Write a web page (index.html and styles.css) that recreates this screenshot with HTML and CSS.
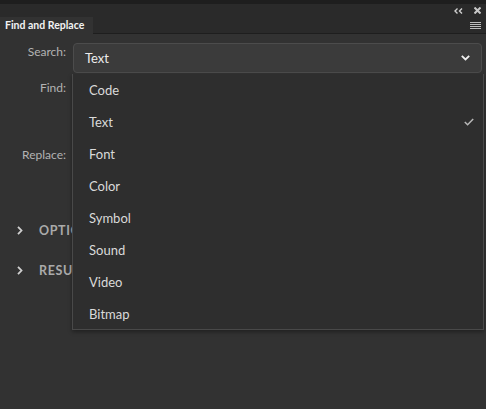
FILE: index.html
```html
<!DOCTYPE html>
<html>
<head>
<meta charset="utf-8">
<link rel="stylesheet" href="styles.css">
</head>
<body>
<div class="panel">
  <div class="topstrip"></div>
  <div class="titlebar">
    <svg class="ico-collapse" width="9" height="6" viewBox="0 0 9 6"><polyline points="3.5,0.5 1,3 3.5,5.5" fill="none" stroke="#d0d0d0" stroke-width="1.4"/><polyline points="8,0.5 5.5,3 8,5.5" fill="none" stroke="#d0d0d0" stroke-width="1.4"/></svg>
    <svg class="ico-close" width="7" height="7" viewBox="0 0 7 7"><path d="M0.5 0.5 L6.5 6.5 M6.5 0.5 L0.5 6.5" stroke="#c8c8c8" stroke-width="2"/></svg>
  </div>
  <div class="tabrow">
    <div class="tab">Find and Replace</div>
    <div class="tabfill">
      <svg class="ico-menu" width="11" height="8" viewBox="0 0 11 8"><path d="M0 0.5H11M0 2.5H11M0 4.5H11M0 6.5H11" stroke="#bdbdbd" stroke-width="1"/></svg>
    </div>
  </div>
  <div class="content">
    <div class="row row-search">
      <div class="label">Search:</div>
      <div class="select">
        <span>Text</span>
        <svg width="9" height="6" viewBox="0 0 9 6"><polyline points="0.8,0.8 4.5,4.5 8.2,0.8" fill="none" stroke="#f0f0f0" stroke-width="1.8"/></svg>
      </div>
    </div>
    <div class="row row-field">
      <div class="label">Find:</div>
      <div class="field"></div>
    </div>
    <div class="row row-field">
      <div class="label">Replace:</div>
      <div class="field"></div>
    </div>
    <div class="section">
      <svg width="6" height="9" viewBox="0 0 6 9"><polyline points="1,0.8 4.5,4.5 1,8.2" fill="none" stroke="#d0d0d0" stroke-width="1.8"/></svg>
      <span>OPTIONS</span>
    </div>
    <div class="section">
      <svg width="6" height="9" viewBox="0 0 6 9"><polyline points="1,0.8 4.5,4.5 1,8.2" fill="none" stroke="#d0d0d0" stroke-width="1.8"/></svg>
      <span>RESULTS</span>
    </div>
  </div>
  <ul class="menu">
    <li>Code</li>
    <li class="checked">Text<svg width="10" height="8" viewBox="0 0 10 8"><polyline points="0.8,4 3.6,6.8 9.2,1" fill="none" stroke="#b8b8b8" stroke-width="1.5"/></svg></li>
    <li>Font</li>
    <li>Color</li>
    <li>Symbol</li>
    <li>Sound</li>
    <li>Video</li>
    <li>Bitmap</li>
  </ul>
</div>
</body>
</html>
```

FILE: styles.css
```css
html, body {
  margin: 0;
  padding: 0;
  background: #323232;
  width: 486px;
  height: 409px;
  overflow: hidden;
  font-family: Lato, "Open Sans", sans-serif;
}
.panel {
  position: relative;
  width: 486px;
  height: 409px;
}
.topstrip {
  height: 4px;
  background: #1e1e1e;
}
.titlebar {
  height: 13px;
  background: #2a2a2a;
  display: flex;
  align-items: center;
  justify-content: flex-end;
  padding-right: 5px;
  gap: 11px;
}
.ico-collapse { display: block; }
.ico-close { display: block; }
.tabrow {
  height: 17px;
  display: flex;
}
.tab {
  width: 93px;
  background: #323232;
  color: #f2f2f2;
  font-weight: bold;
  font-size: 10.5px;
  line-height: 17px;
  padding-left: 5px;
  box-sizing: border-box;
}
.tabfill {
  flex: 1;
  background: #2a2a2a;
  border-bottom: 1px solid #1e1e1e;
  display: flex;
  align-items: center;
  justify-content: flex-end;
  padding-right: 5px;
}
.ico-menu { display: block; margin-top: 1px; }
.content {
  padding: 9px 4px 0 0;
}
.row {
  display: grid;
  grid-template-columns: 66px 1fr;
  column-gap: 7px;
}
.label {
  text-align: right;
  color: #b3b3b3;
  font-size: 12px;
  line-height: 16px;
}
.row-search .label {
  padding-top: 1px;
}
.select {
  height: 30px;
  box-sizing: border-box;
  border: 1px solid #4c4c4c;
  border-radius: 4px;
  background: #3b3b3b;
  display: flex;
  align-items: center;
  justify-content: space-between;
  padding: 0 11px 0 11px;
  color: #ececec;
  font-size: 13px;
}
.select svg { display: block; }
.row-field {
  margin-top: 7px;
}
.field {
  height: 60px;
}
.section {
  height: 40px;
  display: flex;
  align-items: center;
  padding-left: 17px;
  color: #aaaaaa;
  font-weight: bold;
  font-size: 12.5px;
  letter-spacing: 0.6px;
}
.row-field + .section { margin-top: 3px; }
.section svg { display: block; margin-right: 16px; }
.menu {
  position: absolute;
  left: 72px;
  top: 74px;
  width: 412px;
  height: 256px;
  box-sizing: border-box;
  margin: 0;
  padding: 0;
  list-style: none;
  background: #2e2e2e;
  border: 1px solid #494949;
  border-top: none;
  box-shadow: 0 2px 4px rgba(0,0,0,0.35);
}
.menu li {
  height: 32px;
  display: flex;
  align-items: center;
  justify-content: space-between;
  padding: 0 9px 0 16px;
  color: #dadada;
  font-size: 13px;
}
.menu li svg { display: block; }
```
